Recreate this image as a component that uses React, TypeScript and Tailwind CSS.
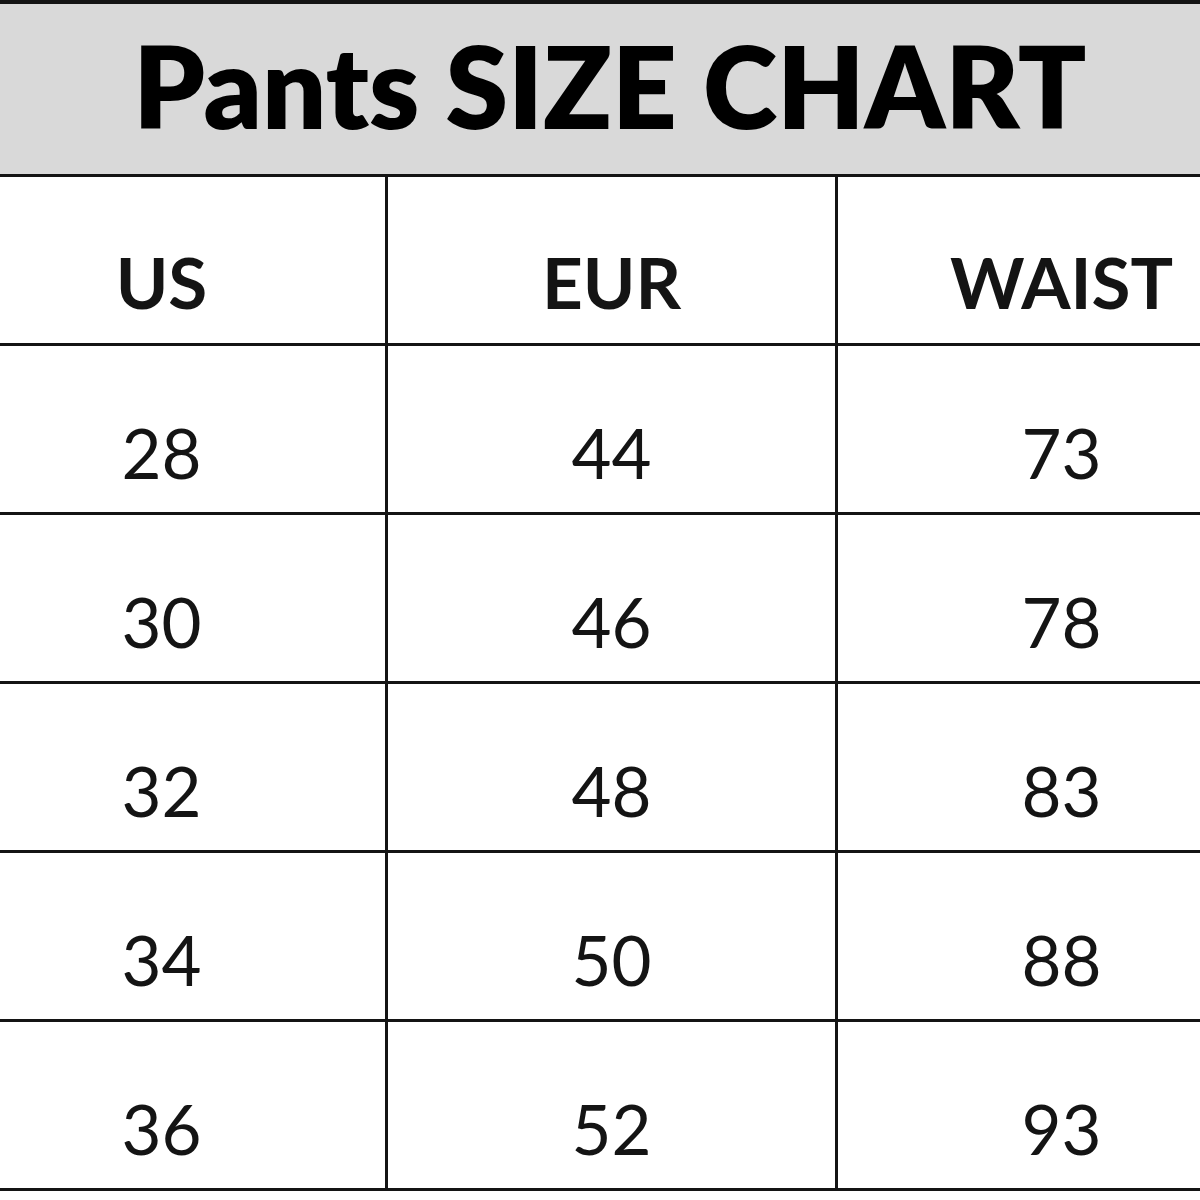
const rows = [
  ["28", "44", "73"],
  ["30", "46", "78"],
  ["32", "48", "83"],
  ["34", "50", "88"],
  ["36", "52", "93"],
];

const font = { fontFamily: '"Lato", "Open Sans", sans-serif' };

export default function App() {
  return (
    <div
      className="w-[1200px] h-[1200px] overflow-hidden bg-white text-[#141414]"
      style={font}
    >
      <div className="h-[174px] border-t-[4px] border-[#141414] bg-[#d9d9d9] flex items-center justify-center">
        <h1 className="text-[113px] font-extrabold leading-none text-black pb-[8px] pl-[20px]">
          Pants SIZE CHART
        </h1>
      </div>

      <div className="ml-[-62px] w-[1347px] grid grid-cols-[447px_447px_447px] auto-rows-[166px] gap-[3px] bg-[#141414] border-y-[3px] border-[#141414]">
        {["US", "EUR", "WAIST"].map((h) => (
          <div
            key={h}
            className="bg-white flex items-center justify-center pt-[42px] text-[71px] font-bold leading-none"
          >
            {h}
          </div>
        ))}
        {rows.map((r) =>
          r.map((v, i) => (
            <div
              key={r[0] + i}
              className="bg-white flex items-center justify-center pt-[46px] text-[69px] leading-none"
            >
              {v}
            </div>
          ))
        )}
      </div>
    </div>
  );
}
